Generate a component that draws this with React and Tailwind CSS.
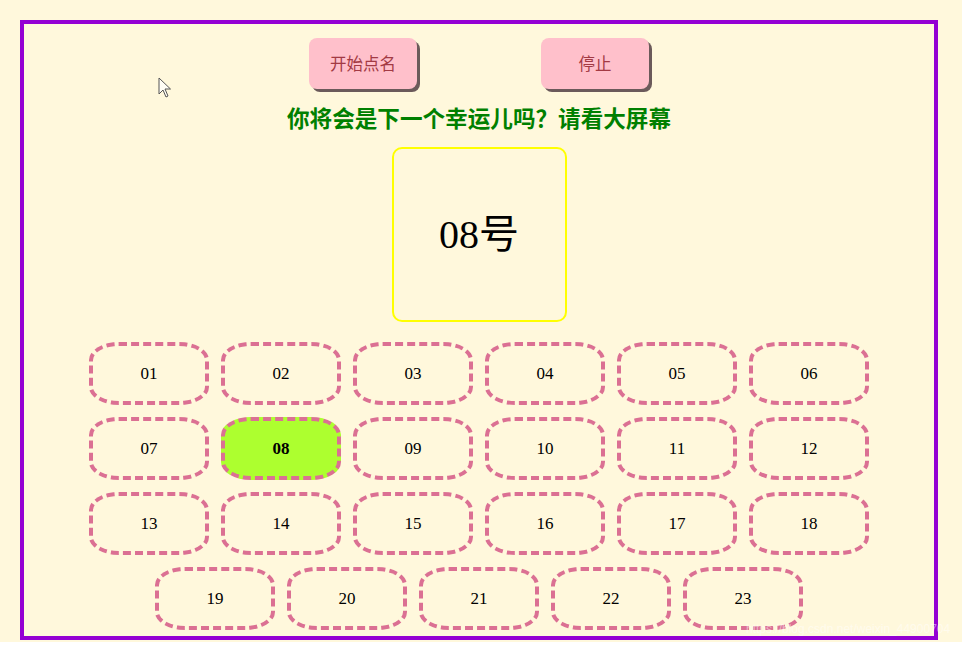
import React from "react";

const nums = ["01","02","03","04","05","06","07","08","09","10","11","12","13","14","15","16","17","18","19","20","21","22","23"];

export default function App() {
  return (
    <div className="relative w-full overflow-hidden bg-[#fff8dc] pt-[20px] pl-[20px] pb-[2px]">
      <div className="relative w-[918px] h-[620px] border-4 border-[#9400d3] flex flex-col items-center">
        <div className="mt-[14px] flex gap-[124px]">
          <button className="w-[108px] h-[51px] rounded-[8px] bg-[#ffc0cb] shadow-[3px_3px_0_#6b5a5a] text-[16.5px] text-[#a33a44] font-['Noto_Sans_CJK_SC',sans-serif]">开始点名</button>
          <button className="w-[108px] h-[51px] rounded-[8px] bg-[#ffc0cb] shadow-[3px_3px_0_#6b5a5a] text-[16.5px] text-[#a33a44] font-['Noto_Sans_CJK_SC',sans-serif]">停止</button>
        </div>
        <div className="mt-[14px] h-[30px] leading-[30px] text-[22.6px] font-bold text-[#008000] font-['Noto_Sans_CJK_SC',sans-serif]">你将会是下一个幸运儿吗？请看大屏幕</div>
        <div className="mt-[14px] w-[175px] h-[175px] rounded-[10px] border-2 border-[#ffff00] flex items-center justify-center text-[40px] text-black font-['Liberation_Serif','Noto_Sans_CJK_SC',serif]">08号</div>
        <div className="mt-[14px] w-[792px] flex flex-wrap justify-center">
          {nums.map((n) => (
            <div
              key={n}
              className={
                n === "08"
                  ? "m-[6px] w-[120px] h-[63px] rounded-[30px/18px] border-4 border-dashed border-[#db7093] bg-[#adff2f] flex items-center justify-center text-[17px] font-bold text-black font-['Liberation_Serif',serif]"
                  : "m-[6px] w-[120px] h-[63px] rounded-[30px/18px] border-4 border-dashed border-[#db7093] flex items-center justify-center text-[17px] text-black font-['Liberation_Serif',serif]"
              }
            >
              {n}
            </div>
          ))}
        </div>
      </div>
      <svg className="absolute left-[158px] top-[77px]" width="14" height="22" viewBox="0 0 14 22">
        <path d="M1 1 L1 17 L5 13 L8 20 L10 19 L7 12 L12.5 12 Z" fill="#fffdf5" stroke="#555" strokeWidth="1" strokeLinejoin="round" />
      </svg>
      <div className="absolute left-[746px] top-[622px] text-[12px] leading-[14px] text-white/50 font-['Liberation_Sans',sans-serif] whitespace-nowrap">https://blog.csdn.net/weixin_44900704</div>
    </div>
  );
}
